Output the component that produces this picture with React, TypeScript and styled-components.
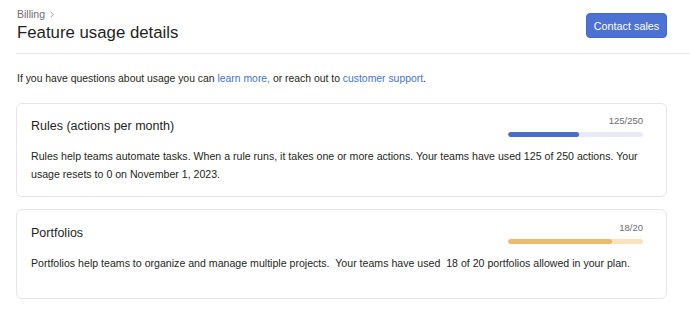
import React from "react";
import styled, { createGlobalStyle } from "styled-components";

const Global = createGlobalStyle`
  html, body { margin: 0; padding: 0; background: #ffffff; }
  body { font-family: "Liberation Sans", Arial, sans-serif; color: #1e1f21; }
`;

const Page = styled.div`
  width: 690px;
  height: 311px;
  overflow: hidden;
  background: #fff;
`;

const Header = styled.header`
  margin-left: 16px;
  padding: 7px 23px 0 1px;
  height: 46px;
  border-bottom: 1px solid #e8e8e8;
  display: flex;
  justify-content: space-between;
  align-items: flex-start;
`;

const TitleBlock = styled.div`
  display: flex;
  flex-direction: column;
`;

const Crumb = styled.div`
  font-size: 10.5px;
  line-height: 14px;
  color: #6d6e6f;
  display: flex;
  align-items: center;
  gap: 4px;
`;

const PageTitle = styled.h1`
  margin: 2px 0 0;
  font-size: 16.8px;
  line-height: 20px;
  font-weight: 400;
  color: #1e1f21;
`;

const PrimaryButton = styled.button`
  margin-top: 6px;
  height: 25px;
  width: 81px;
  padding: 0;
  border: 1px solid #4469cc;
  border-radius: 4px;
  background: #4d72d3;
  color: #fff;
  font-family: inherit;
  font-size: 10.8px;
  cursor: pointer;
`;

const Content = styled.main`
  padding: 17px 23px 0 16px;
`;

const Intro = styled.p`
  margin: 0 0 0 1px;
  font-size: 10.4px;
  line-height: 16px;
  color: #1e1f21;
`;

const Link = styled.a`
  color: #4573d2;
  text-decoration: none;
`;

const CardList = styled.div`
  margin-top: 16px;
  display: flex;
  flex-direction: column;
  gap: 12px;
`;

const Card = styled.section<{ $minHeight: number; $topPad: number }>`
  border: 1px solid #e6e6e6;
  border-radius: 6px;
  padding: ${(p) => p.$topPad}px 23px 12px 14px;
  min-height: ${(p) => p.$minHeight}px;
  box-sizing: border-box;
`;

const CardTop = styled.div`
  display: flex;
  justify-content: space-between;
  align-items: flex-start;
`;

const CardTitle = styled.h2`
  margin: 3px 0 0;
  font-size: 12.5px;
  line-height: 16px;
  font-weight: 400;
  color: #1e1f21;
`;

const Meter = styled.div`
  width: 135px;
  display: flex;
  flex-direction: column;
  align-items: flex-end;
  gap: 5px;
`;

const Count = styled.span`
  font-size: 9.5px;
  line-height: 12px;
  color: #6d6e6f;
`;

const Track = styled.div<{ $track: string }>`
  width: 100%;
  height: 5px;
  border-radius: 3px;
  background: ${(p) => p.$track};
  overflow: hidden;
`;

const Fill = styled.div<{ $fill: string }>`
  height: 100%;
  border-radius: 3px;
  background: ${(p) => p.$fill};
`;

const Description = styled.p`
  margin: 10px 0 0;
  font-size: 10.6px;
  line-height: 18px;
  color: #1e1f21;
`;

type Usage = {
  title: string;
  used: number;
  total: number;
  fillPct: number;
  fill: string;
  track: string;
  text: string;
  minHeight: number;
  topPad: number;
};

const usages: Usage[] = [
  {
    title: "Rules (actions per month)",
    used: 125,
    total: 250,
    fillPct: 52.5,
    fill: "#4a6dcc",
    track: "#e8eaf8",
    text:
      "Rules help teams automate tasks. When a rule runs, it takes one or more actions. Your teams have used 125 of 250 actions. Your usage resets to 0 on November 1, 2023.",
    minHeight: 94,
    topPad: 11,
  },
  {
    title: "Portfolios",
    used: 18,
    total: 20,
    fillPct: 77,
    fill: "#e8bc6c",
    track: "#fbe1bd",
    text:
      "Portfolios help teams to organize and manage multiple projects.\u00a0 Your teams have used \u00a018 of 20 portfolios allowed in your plan.",
    minHeight: 90,
    topPad: 12,
  },
];

export default function App() {
  return (
    <Page>
      <Global />
      <Header>
        <TitleBlock>
          <Crumb>
            Billing
            <svg width="6" height="7" viewBox="0 0 6 8" fill="none">
              <path d="M1.5 1l3 3-3 3" stroke="#8a8b8c" strokeWidth="1" />
            </svg>
          </Crumb>
          <PageTitle>Feature usage details</PageTitle>
        </TitleBlock>
        <PrimaryButton>Contact sales</PrimaryButton>
      </Header>
      <Content>
        <Intro>
          If you have questions about usage you can <Link href="#">learn more,</Link> or reach out to{" "}
          <Link href="#">customer support</Link>.
        </Intro>
        <CardList>
          {usages.map((u) => (
            <Card key={u.title} $minHeight={u.minHeight} $topPad={u.topPad}>
              <CardTop>
                <CardTitle>{u.title}</CardTitle>
                <Meter>
                  <Count>
                    {u.used}/{u.total}
                  </Count>
                  <Track $track={u.track}>
                    <Fill $fill={u.fill} style={{ width: `${u.fillPct}%` }} />
                  </Track>
                </Meter>
              </CardTop>
              <Description>{u.text}</Description>
            </Card>
          ))}
        </CardList>
      </Content>
    </Page>
  );
}
